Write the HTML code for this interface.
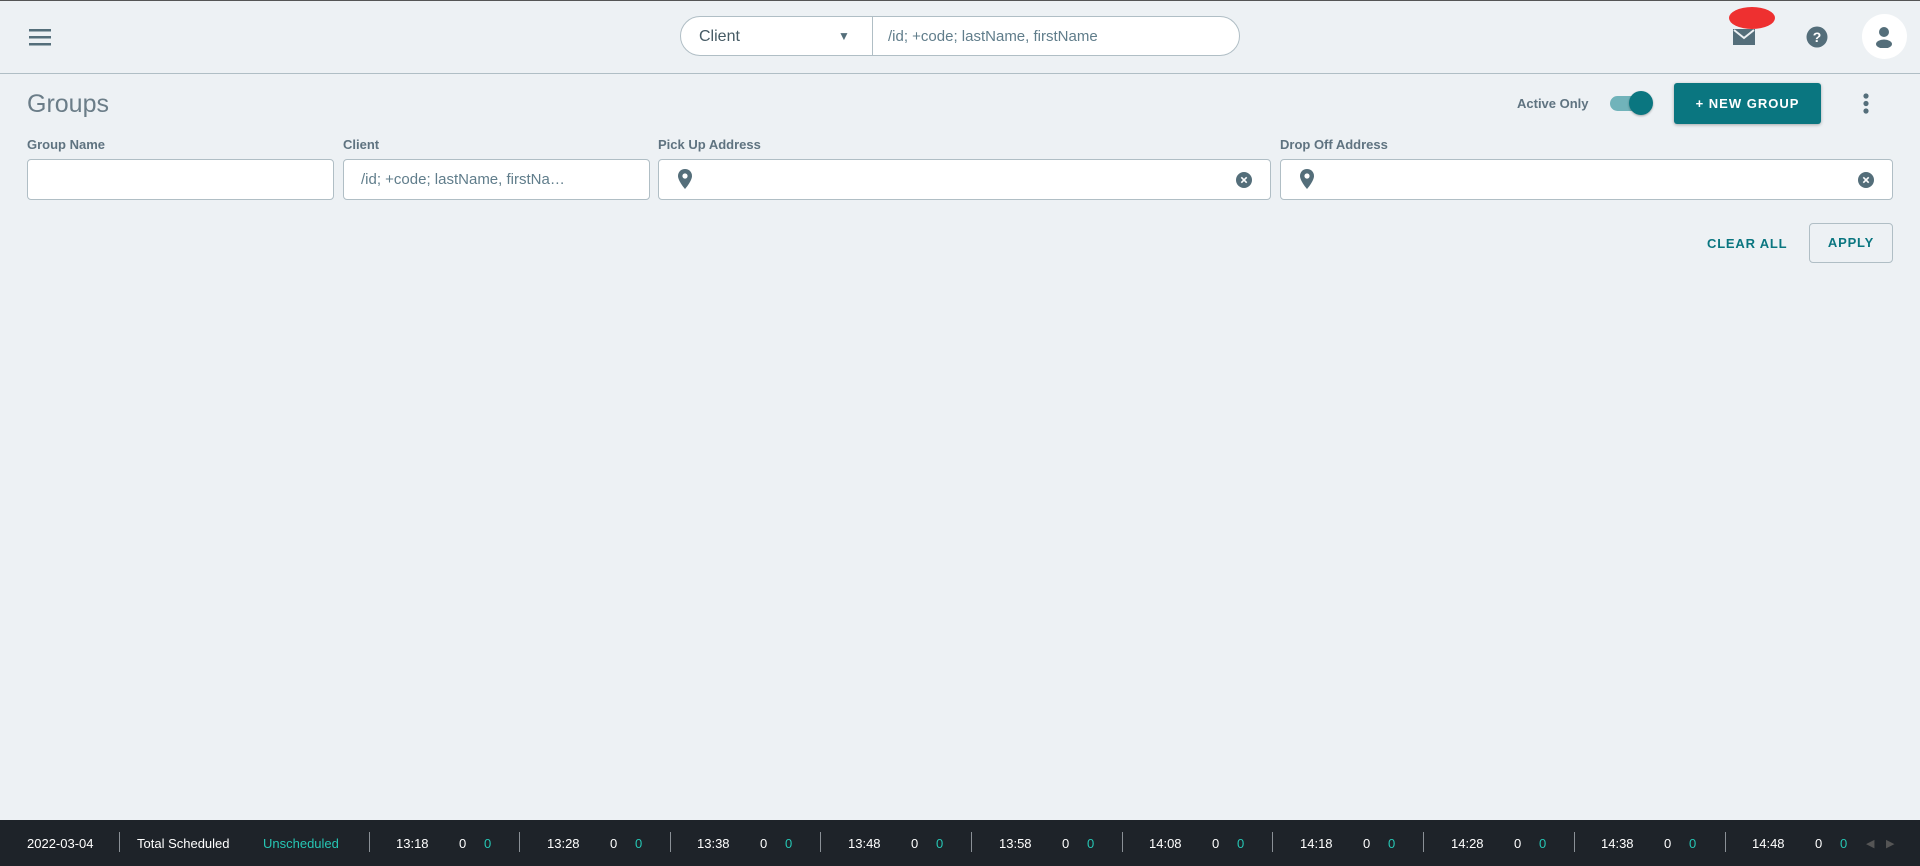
<!DOCTYPE html>
<html><head><meta charset="utf-8"><style>
*{box-sizing:border-box;margin:0;padding:0}
body{width:1920px;height:866px;background:#edf1f4;font-family:"Liberation Sans",sans-serif;position:relative;overflow:hidden;color:#546e7a}
.abs{position:absolute}
.hdr{left:0;top:0;width:1920px;height:74px;border-top:1px solid #555;border-bottom:1px solid #b0bec5}
.lbl{font-size:13px;font-weight:bold;color:#5f7380;top:137px}
.inp{top:159px;height:41px;background:#fff;border:1px solid #b0bec5;border-radius:4px}
.foot{left:0;top:820px;width:1920px;height:46px;background:#1e2329;color:#fff;font-size:13px}
.foot span{position:absolute;top:16px}
.sep{position:absolute;top:12px;width:1px;height:20px;background:#8a9096}
.t{color:#26c6b4}
</style></head><body>
<div class="abs hdr"></div>
<svg class="abs" style="left:29px;top:28px" width="22" height="18"><rect y="1" width="22" height="2.5" fill="#546e7a"/><rect y="8" width="22" height="2.5" fill="#546e7a"/><rect y="15" width="22" height="2.5" fill="#546e7a"/></svg>
<div class="abs" style="left:680px;top:16px;width:560px;height:40px;border:1px solid #b0bec5;border-radius:20px;background:#fff"></div>
<div class="abs" style="left:872px;top:17px;width:1px;height:38px;background:#b0bec5"></div>
<div class="abs" style="left:699px;top:28px;font-size:16px;color:#455a64">Client</div>
<div class="abs" style="left:838px;top:29px;font-size:12px;color:#546e7a">▼</div>
<div class="abs" style="left:888px;top:28px;font-size:15px;color:#607d8b">/id; +code; lastName, firstName</div>
<svg class="abs" style="left:1733px;top:29px" width="22" height="16"><rect width="22" height="16" fill="#546e7a"/><path d="M1 1 L11 9 L21 1" stroke="#edf1f4" stroke-width="2" fill="none"/></svg>
<div class="abs" style="left:1729px;top:7px;width:46px;height:22px;border-radius:50%;background:#ee3030"></div>
<svg class="abs" style="left:1806px;top:26px" width="22" height="22"><circle cx="11" cy="11" r="10.5" fill="#546e7a"/><text x="11" y="16" font-size="14" font-weight="bold" fill="#fff" text-anchor="middle" font-family="Liberation Sans">?</text></svg>
<div class="abs" style="left:1862px;top:14px;width:45px;height:45px;border-radius:50%;background:#fff"></div>
<svg class="abs" style="left:1874px;top:26px" width="20" height="22"><circle cx="10" cy="6" r="5" fill="#546e7a"/><ellipse cx="10" cy="18" rx="8" ry="4.5" fill="#546e7a"/></svg>
<div class="abs" style="left:27px;top:90px;font-size:25px;font-weight:300;color:#6b7d88">Groups</div>
<div class="abs" style="left:1517px;top:96px;font-size:13px;font-weight:bold;color:#5f7380">Active Only</div>
<div class="abs" style="left:1610px;top:96px;width:38px;height:15px;border-radius:8px;background:#71b3ba"></div>
<div class="abs" style="left:1629px;top:91px;width:24px;height:24px;border-radius:50%;background:#0a7680;box-shadow:0 1px 2px rgba(0,0,0,.3)"></div>
<div class="abs" style="left:1674px;top:83px;width:147px;height:41px;background:#0a7680;border-radius:3px;box-shadow:0 1px 3px rgba(0,0,0,.3);color:#fff;font-size:13px;font-weight:bold;letter-spacing:1px;text-align:center;line-height:41px">+ NEW GROUP</div>
<svg class="abs" style="left:1862px;top:92px" width="8" height="24"><circle cx="4" cy="4" r="2.6" fill="#546e7a"/><circle cx="4" cy="11.5" r="2.6" fill="#546e7a"/><circle cx="4" cy="19" r="2.6" fill="#546e7a"/></svg>
<div class="abs lbl" style="left:27px">Group Name</div>
<div class="abs lbl" style="left:343px">Client</div>
<div class="abs lbl" style="left:658px">Pick Up Address</div>
<div class="abs lbl" style="left:1280px">Drop Off Address</div>
<div class="abs inp" style="left:27px;width:307px"></div>
<div class="abs inp" style="left:343px;width:307px"><span style="position:absolute;left:17px;top:11px;font-size:15px;color:#607d8b">/id; +code; lastName, firstNa…</span></div>
<div class="abs inp" style="left:658px;width:613px"></div>
<div class="abs inp" style="left:1280px;width:613px"></div>
<svg class="abs" style="left:678px;top:169px" width="14" height="20"><path d="M7 0C3 0 0 3 0 7c0 5 7 13 7 13s7-8 7-13C14 3 11 0 7 0z" fill="#546e7a"/><circle cx="7" cy="7" r="2.6" fill="#fff"/></svg>
<svg class="abs" style="left:1300px;top:169px" width="14" height="20"><path d="M7 0C3 0 0 3 0 7c0 5 7 13 7 13s7-8 7-13C14 3 11 0 7 0z" fill="#546e7a"/><circle cx="7" cy="7" r="2.6" fill="#fff"/></svg>
<svg class="abs" style="left:1236px;top:172px" width="16" height="16"><circle cx="8" cy="8" r="8" fill="#546e7a"/><path d="M5.3 5.3l5.4 5.4M10.7 5.3l-5.4 5.4" stroke="#fff" stroke-width="1.6"/></svg>
<svg class="abs" style="left:1858px;top:172px" width="16" height="16"><circle cx="8" cy="8" r="8" fill="#546e7a"/><path d="M5.3 5.3l5.4 5.4M10.7 5.3l-5.4 5.4" stroke="#fff" stroke-width="1.6"/></svg>
<div class="abs" style="left:1707px;top:236px;font-size:13px;font-weight:bold;letter-spacing:0.8px;color:#0a7680">CLEAR ALL</div>
<div class="abs" style="left:1809px;top:223px;width:84px;height:40px;border:1px solid #b0bec5;border-radius:4px;font-size:13px;font-weight:bold;letter-spacing:0.8px;color:#0a7680;text-align:center;line-height:38px">APPLY</div>
<div class="abs foot">
<span style="left:27px">2022-03-04</span><div class="sep" style="left:119px"></div>
<span style="left:137px">Total Scheduled</span><span class="t" style="left:263px">Unscheduled</span><div class="sep" style="left:369px"></div>
<span style="left:396px">13:18</span><span style="left:459px">0</span><span class="t" style="left:484px">0</span><div class="sep" style="left:519px"></div>
<span style="left:547px">13:28</span><span style="left:610px">0</span><span class="t" style="left:635px">0</span><div class="sep" style="left:670px"></div>
<span style="left:697px">13:38</span><span style="left:760px">0</span><span class="t" style="left:785px">0</span><div class="sep" style="left:820px"></div>
<span style="left:848px">13:48</span><span style="left:911px">0</span><span class="t" style="left:936px">0</span><div class="sep" style="left:971px"></div>
<span style="left:999px">13:58</span><span style="left:1062px">0</span><span class="t" style="left:1087px">0</span><div class="sep" style="left:1122px"></div>
<span style="left:1149px">14:08</span><span style="left:1212px">0</span><span class="t" style="left:1237px">0</span><div class="sep" style="left:1272px"></div>
<span style="left:1300px">14:18</span><span style="left:1363px">0</span><span class="t" style="left:1388px">0</span><div class="sep" style="left:1423px"></div>
<span style="left:1451px">14:28</span><span style="left:1514px">0</span><span class="t" style="left:1539px">0</span><div class="sep" style="left:1574px"></div>
<span style="left:1601px">14:38</span><span style="left:1664px">0</span><span class="t" style="left:1689px">0</span><div class="sep" style="left:1725px"></div>
<span style="left:1752px">14:48</span><span style="left:1815px">0</span><span class="t" style="left:1840px">0</span>
<span style="left:1866px;color:#555;font-size:11px;top:17px">◀</span><span style="left:1886px;color:#555;font-size:11px;top:17px">▶</span>
</div>
</body></html>
